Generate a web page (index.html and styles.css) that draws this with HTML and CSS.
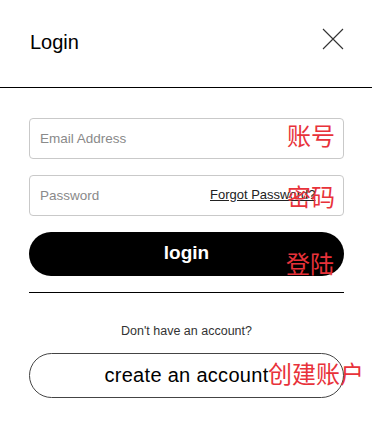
FILE: index.html
```
<!DOCTYPE html>
<html>
<head>
<meta charset="utf-8">
<link rel="stylesheet" href="styles.css">
</head>
<body>
<div class="modal">
  <header class="head">
    <h1 class="title">Login</h1>
    <button class="close" aria-label="close">
      <svg width="22" height="22" viewBox="0 0 22 22"><path d="M1 1L21 21M21 1L1 21" stroke="#333" stroke-width="1.1" fill="none"/></svg>
    </button>
  </header>
  <form class="form">
    <div class="field">
      <input class="input" type="text" placeholder="Email Address">
      <span class="note note-acc">账号</span>
    </div>
    <div class="field">
      <input class="input" type="password" placeholder="Password">
      <a class="forgot" href="#">Forgot Password?</a>
      <span class="note note-pw">密码</span>
    </div>
    <div class="field">
      <button class="btn-login" type="button">login</button>
      <span class="note note-login">登陆</span>
    </div>
    <hr class="rule">
    <p class="hint">Don't have an account?</p>
    <div class="field">
      <button class="btn-create" type="button">create an account</button>
      <span class="note note-create">创建账户</span>
    </div>
  </form>
</div>
</body>
</html>
```
FILE: styles.css
```
* { box-sizing: border-box; }
html, body { margin: 0; padding: 0; background: #fff; }
body { font-family: "Liberation Sans", Arial, sans-serif; color: #000; width: 372px; }
.head {
  height: 88px;
  border-bottom: 1px solid #000;
  display: flex;
  align-items: flex-start;
  justify-content: space-between;
  padding: 0 28px 0 30px;
}
.title { margin: 30px 0 0; font-size: 20px; font-weight: normal; line-height: 24px; }
.close { margin-top: 28px; padding: 0; border: 0; background: none; width: 22px; height: 22px; }
.close svg { display: block; }
.form { padding: 30px 28px 0 29px; display: flex; flex-direction: column; }
.field { position: relative; margin-bottom: 16px; }
.input {
  display: block; width: 100%; height: 41px;
  border: 1px solid #c9c9c9; border-radius: 4px;
  padding: 0 10px; font: 13.5px "Liberation Sans", Arial, sans-serif; color: #333;
  outline: none;
}
.input::placeholder { color: #8a8a8a; }
.forgot {
  position: absolute; left: 181px; top: 12px;
  font-size: 13px; color: #222; text-decoration: underline;
}
.btn-login {
  display: block; width: 100%; height: 44px; border: 0; border-radius: 22px;
  background: #000; color: #fff; font: bold 19px "Liberation Sans", Arial, sans-serif;
  padding: 0 0 3px;
}
.rule { margin: 0; border: 0; border-top: 1px solid #000; }
.hint { margin: 31px 0 15px; text-align: center; font-size: 12.5px; color: #333; line-height: 14px; }
.btn-create {
  display: block; width: 100%; height: 45px; border: 1px solid #444; border-radius: 23px;
  background: #fff; color: #000; font: 20px "Liberation Sans", Arial, sans-serif;
  letter-spacing: 0.3px; padding: 0;
}
.note {
  position: absolute; color: #e8323a; font-size: 24px; line-height: 1;
  font-family: "Noto Sans CJK SC", sans-serif; pointer-events: none; white-space: nowrap;
}
.note-acc { left: 258px; top: 5px; }
.note-pw { left: 258px; top: 9px; }
.note-login { left: 257px; top: 19px; }
.note-create { left: 239px; top: 8px; }
```
